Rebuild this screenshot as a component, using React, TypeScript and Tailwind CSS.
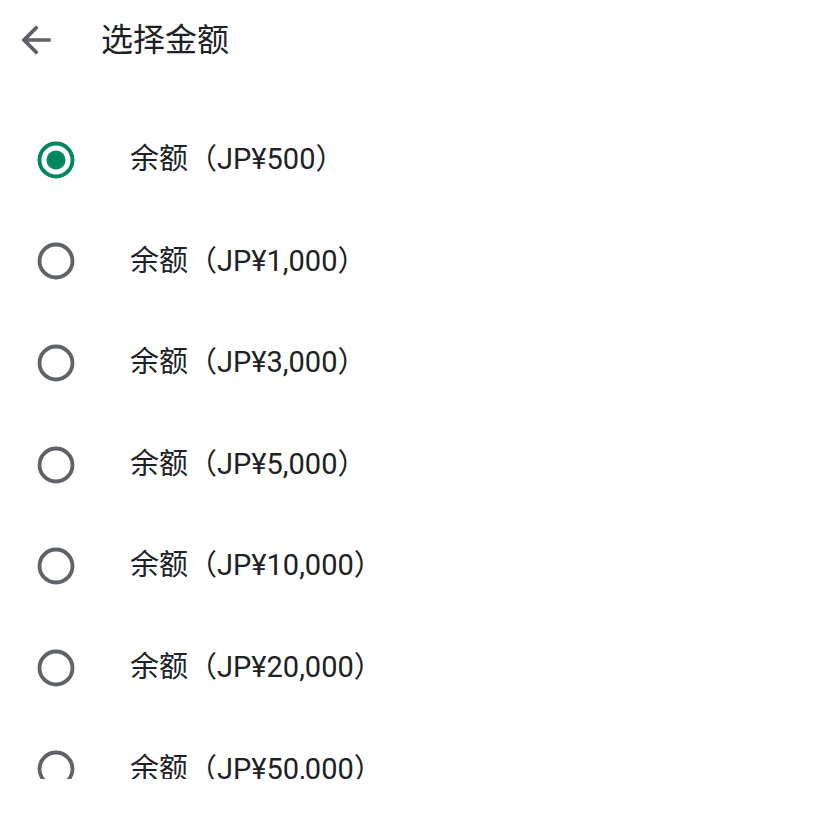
import React from "react";

const amounts = ["500", "1,000", "3,000", "5,000", "10,000", "20,000", "50,000"];

function Radio({ checked }: { checked: boolean }) {
  const color = checked ? "#01875f" : "#5f6368";
  return (
    <svg width="44" height="44" viewBox="0 0 24 24">
      <circle cx="12" cy="12" r="9" fill="none" stroke={color} strokeWidth="2.1" />
      {checked && <circle cx="12" cy="12" r="5.2" fill={color} />}
    </svg>
  );
}

export default function App() {
  return (
    <div
      className="w-[838px] h-[813px] bg-white overflow-hidden"
      style={{ fontFamily: 'Roboto, "Noto Sans CJK SC", sans-serif' }}
    >
      <div className="h-[779px] overflow-hidden">
        <div className="h-[80px] flex items-center">
          <div className="w-[70px] flex justify-center">
            <svg width="44" height="44" viewBox="0 0 24 24" className="ml-[1px]">
              <path
                fill="#5f6368"
                d="M20 11H7.83l5.59-5.59L12 4l-8 8 8 8 1.41-1.41L7.83 13H20v-2z"
              />
            </svg>
          </div>
          <div className="ml-[31px] text-[32px] text-[#202124]">选择金额</div>
        </div>
        <div className="pt-[29px]">
          {amounts.map((a, i) => (
            <div key={a} className="h-[101.6px] flex items-center">
              <div className="w-[112px] flex justify-center">
                <Radio checked={i === 0} />
              </div>
              <div className="ml-[18px] text-[29px] text-[#202124]">余额（JP¥{a}）</div>
            </div>
          ))}
        </div>
      </div>
    </div>
  );
}
